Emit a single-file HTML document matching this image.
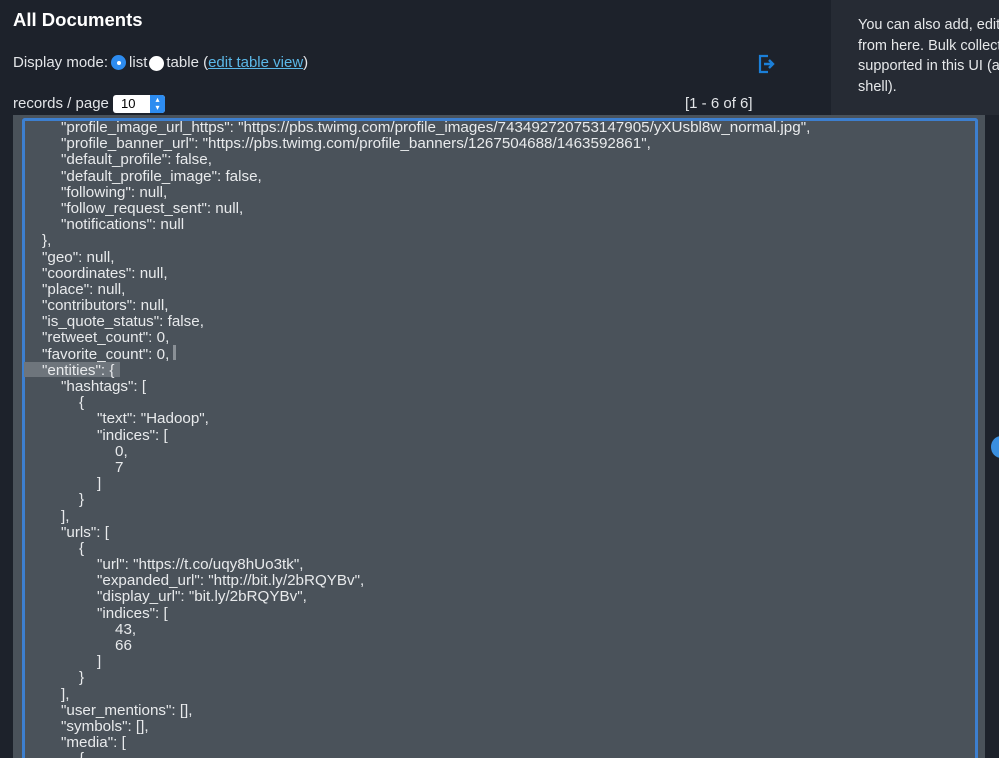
<!DOCTYPE html>
<html><head><meta charset="utf-8"><style>
html,body{margin:0;width:999px;height:758px;overflow:hidden}
body{background:#1d222b;font-family:"Liberation Sans",Arial,sans-serif;color:#e3e5e8;position:relative}
.a{position:absolute;white-space:nowrap}
h1{position:absolute;left:13px;top:9px;margin:0;font-size:18.5px;font-weight:bold;color:#fff}
.side{position:absolute;left:831px;top:0;width:168px;height:115px;background:#262b34}
.side div{position:absolute;left:27px;top:15px;font-size:14.5px;line-height:20.7px;color:#e6e8ea;white-space:nowrap}
.ed{position:absolute;left:13px;top:115px;width:972px;height:643px;background:#4a525a}
.bd{position:absolute;left:22px;top:118px;width:950px;height:650px;border:3px solid #3d7fcf;border-bottom:none;border-radius:3px 3px 0 0}
.code{position:absolute;left:24px;top:120px;font-size:15.2px;line-height:16.2px;color:#e8eaec}
.code div{height:16.2px;white-space:pre}
.l1{padding-left:18px}.l2{padding-left:37px}.l3{padding-left:55px}.l4{padding-left:73px}.l5{padding-left:91px}
</style></head><body>
<h1>All Documents</h1>
<div class="a" style="left:13px;top:54px;font-size:15px">Display mode:<span style="display:inline-block;width:15px;height:15px;border-radius:50%;background:#2d8cf0;vertical-align:-3px;margin:0 3px;position:relative"><span style="position:absolute;left:5.5px;top:5.5px;width:4px;height:4px;border-radius:50%;background:#fff"></span></span>list<span style="display:inline-block;width:15px;height:15px;border-radius:50%;background:#fff;vertical-align:-4px;margin:0 2px"></span>table (<span style="color:#5bb8e8;text-decoration:underline">edit table view</span>)</div>
<svg class="a" style="left:757px;top:54px" width="20" height="20" viewBox="0 0 20 20"><path d="M11 2H3v16h8" fill="none" stroke="#1b7fd8" stroke-width="2.2"/><path d="M7 10h8M12 6l4 4-4 4" fill="none" stroke="#1b7fd8" stroke-width="2.4"/></svg>
<div class="a" style="left:13px;top:95px;font-size:15px">records / page</div>
<div class="a" style="left:113px;top:95px;width:52px;height:18px;background:#fff;border-radius:3px;overflow:hidden"><span style="position:absolute;left:8px;top:1px;color:#000;font-size:13px">10</span><span style="position:absolute;right:0;top:0;width:15px;height:18px;background:#2d8cf0;color:#fff;font-size:8px;line-height:8px;text-align:center;padding-top:1px">▴<br>▾</span></div>
<div class="a" style="left:685px;top:95px;font-size:15px">[1 - 6 of 6]</div>
<div class="side"><div>You can also add, edit, a<br>from here. Bulk collectio<br>supported in this UI (alt<br>shell).</div></div>
<div class="ed"></div>
<div class="a" style="left:991px;top:436px;width:20px;height:22px;border-radius:50%;background:#3a8fe0"></div>
<div class="bd"></div>
<div class="a" style="left:24px;top:362px;width:96px;height:15px;background:#6e757c"></div>
<div class="a" style="left:173px;top:345px;width:3px;height:15px;background:#8a9096"></div>
<div class="code">
<div class="l2">"profile_image_url_https": "https://pbs.twimg.com/profile_images/743492720753147905/yXUsbl8w_normal.jpg",</div>
<div class="l2">"profile_banner_url": "https://pbs.twimg.com/profile_banners/1267504688/1463592861",</div>
<div class="l2">"default_profile": false,</div>
<div class="l2">"default_profile_image": false,</div>
<div class="l2">"following": null,</div>
<div class="l2">"follow_request_sent": null,</div>
<div class="l2">"notifications": null</div>
<div class="l1">},</div>
<div class="l1">"geo": null,</div>
<div class="l1">"coordinates": null,</div>
<div class="l1">"place": null,</div>
<div class="l1">"contributors": null,</div>
<div class="l1">"is_quote_status": false,</div>
<div class="l1">"retweet_count": 0,</div>
<div class="l1">"favorite_count": 0,</div>
<div class="l1">"entities": {</div>
<div class="l2">"hashtags": [</div>
<div class="l3">{</div>
<div class="l4">"text": "Hadoop",</div>
<div class="l4">"indices": [</div>
<div class="l5">0,</div>
<div class="l5">7</div>
<div class="l4">]</div>
<div class="l3">}</div>
<div class="l2">],</div>
<div class="l2">"urls": [</div>
<div class="l3">{</div>
<div class="l4">"url": "https://t.co/uqy8hUo3tk",</div>
<div class="l4">"expanded_url": "http://bit.ly/2bRQYBv",</div>
<div class="l4">"display_url": "bit.ly/2bRQYBv",</div>
<div class="l4">"indices": [</div>
<div class="l5">43,</div>
<div class="l5">66</div>
<div class="l4">]</div>
<div class="l3">}</div>
<div class="l2">],</div>
<div class="l2">"user_mentions": [],</div>
<div class="l2">"symbols": [],</div>
<div class="l2">"media": [</div>
<div class="l3">{</div>
</div>
</body></html>
